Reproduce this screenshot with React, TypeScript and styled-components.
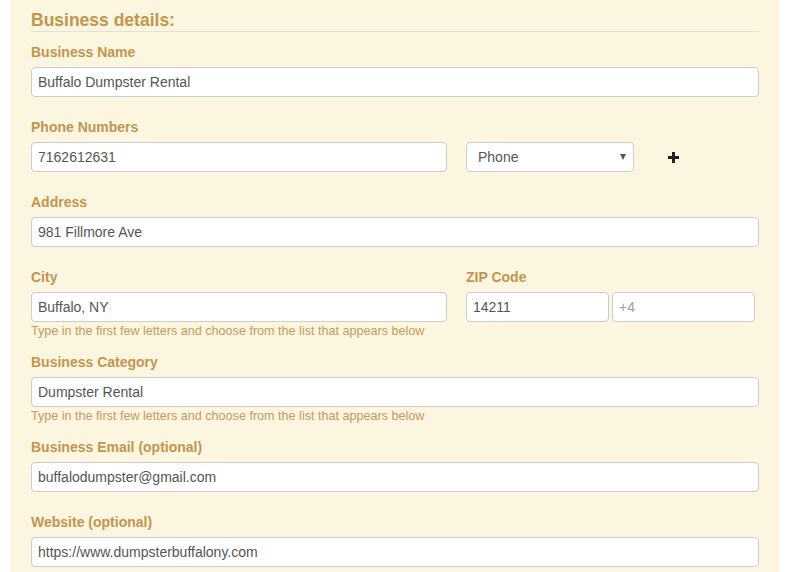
import React from 'react';
import styled, {createGlobalStyle} from 'styled-components';

const Colors = {
  Cream: '#fcf5e0',
  Gold: '#c1954f',
  Hint: '#c49b5c',
  Rule: '#e4dfd2',
  Border: '#cccccc',
  Text: '#555555',
};

const GlobalStyle = createGlobalStyle`
  html, body {
    margin: 0;
    padding: 0;
    background: #ffffff;
    font-family: "Liberation Sans", Arial, sans-serif;
  }
`;

const Page = styled.div`
  padding-left: 10px;
  height: 572px;
  overflow: hidden;
`;

const Panel = styled.form`
  box-sizing: border-box;
  width: 769px;
  min-height: 600px;
  padding: 10px 20px 0 21px;
  background-color: ${Colors.Cream};
`;

const Heading = styled.h4`
  margin: 0 0 10px 0;
  font-size: 17.5px;
  line-height: 21px;
  font-weight: bold;
  color: ${Colors.Gold};
  border-bottom: 1px solid ${Colors.Rule};
`;

const Group = styled.div`
  margin-bottom: ${(props: {gap: number}) => props.gap}px;
`;

const Row = styled.div`
  display: grid;
  grid-template-columns: ${(props: {cols: string}) => props.cols};
  column-gap: 19px;
  align-items: start;
`;

const Label = styled.label`
  display: block;
  margin-bottom: 5px;
  font-size: 14px;
  line-height: 20px;
  font-weight: bold;
  color: ${Colors.Gold};
`;

const Input = styled.input`
  box-sizing: border-box;
  display: block;
  width: 100%;
  height: 30px;
  margin: 0;
  padding: 0 6px;
  font-family: "Liberation Sans", Arial, sans-serif;
  font-size: 14px;
  color: ${Colors.Text};
  background: #ffffff;
  border: 1px solid ${Colors.Border};
  border-radius: 4px;
  outline: none;

  &::placeholder {
    color: #a0a0a0;
  }
`;

const Help = styled.div`
  margin-top: 1px;
  font-size: 12.6px;
  line-height: 16px;
  color: ${Colors.Hint};
`;

const SelectWrap = styled.div`
  position: relative;
  width: 168px;
`;

const Select = styled.select`
  box-sizing: border-box;
  display: block;
  width: 100%;
  height: 30px;
  margin: 0;
  padding: 0 20px 0 11px;
  font-family: "Liberation Sans", Arial, sans-serif;
  font-size: 14px;
  color: ${Colors.Text};
  background: #ffffff;
  border: 1px solid ${Colors.Border};
  border-radius: 4px;
  appearance: none;
  -webkit-appearance: none;
  outline: none;
`;

const Caret = styled.span`
  position: absolute;
  right: 8px;
  top: 12px;
  width: 0;
  height: 0;
  border-left: 3px solid transparent;
  border-right: 3px solid transparent;
  border-top: 6px solid #555555;
  pointer-events: none;
`;

const AddButton = styled.button`
  display: flex;
  align-items: center;
  justify-content: center;
  width: 14px;
  height: 30px;
  margin-left: 32px;
  padding: 0;
  border: 0;
  background: transparent;
  cursor: pointer;
`;

const PhoneControls = styled.div`
  display: flex;
  align-items: flex-start;
`;

const ZipPair = styled.div`
  display: grid;
  grid-template-columns: 143px 143px;
  column-gap: 3px;
`;

const Plus = () => (
  <svg width="11" height="11" viewBox="0 0 11 11">
    <rect x="4" y="0" width="3" height="11" fill="#222"/>
    <rect x="0" y="4" width="11" height="3" fill="#222"/>
  </svg>
);

const HINT = 'Type in the first few letters and choose from the list that appears below';

const App = () => {
  return (
    <Page>
      <GlobalStyle/>
      <Panel onSubmit={e => e.preventDefault()}>
        <Heading>Business details:</Heading>

        <Group gap={20}>
          <Label>Business Name</Label>
          <Input defaultValue="Buffalo Dumpster Rental"/>
        </Group>

        <Group gap={20}>
          <Label>Phone Numbers</Label>
          <Row cols="416px auto">
            <Input defaultValue="7162612631"/>
            <PhoneControls>
              <SelectWrap>
                <Select defaultValue="Phone">
                  <option>Phone</option>
                  <option>Mobile</option>
                  <option>Fax</option>
                  <option>Toll Free</option>
                </Select>
                <Caret/>
              </SelectWrap>
              <AddButton type="button"><Plus/></AddButton>
            </PhoneControls>
          </Row>
        </Group>

        <Group gap={20}>
          <Label>Address</Label>
          <Input defaultValue="981 Fillmore Ave"/>
        </Group>

        <Group gap={13}>
          <Row cols="416px auto">
            <div>
              <Label>City</Label>
              <Input defaultValue="Buffalo, NY"/>
              <Help>{HINT}</Help>
            </div>
            <div>
              <Label>ZIP Code</Label>
              <ZipPair>
                <Input defaultValue="14211"/>
                <Input placeholder="+4"/>
              </ZipPair>
            </div>
          </Row>
        </Group>

        <Group gap={13}>
          <Label>Business Category</Label>
          <Input defaultValue="Dumpster Rental"/>
          <Help>{HINT}</Help>
        </Group>

        <Group gap={20}>
          <Label>Business Email (optional)</Label>
          <Input defaultValue="buffalodumpster@gmail.com"/>
        </Group>

        <Group gap={20}>
          <Label>Website (optional)</Label>
          <Input defaultValue="https://www.dumpsterbuffalony.com"/>
        </Group>
      </Panel>
    </Page>
  );
};

export default App;
